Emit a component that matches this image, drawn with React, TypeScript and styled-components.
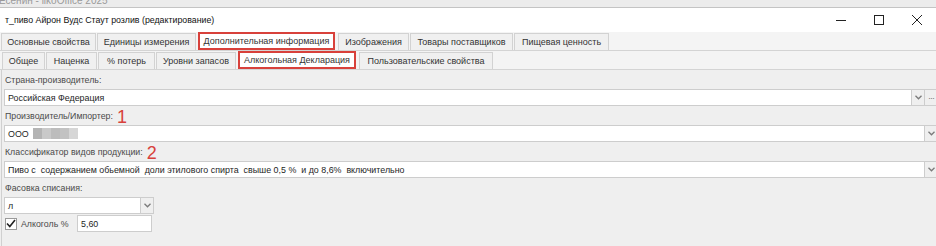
import React from 'react';
import styled, { createGlobalStyle } from 'styled-components';

const GlobalStyle = createGlobalStyle`
  html, body {
    margin: 0;
    padding: 0;
    background: #efefef;
  }
  body {
    font-family: "Liberation Sans", Arial, sans-serif;
  }
`;

const Screen = styled.div`
  width: 936px;
  height: 246px;
  overflow: hidden;
  background: #efefef;
  display: flex;
  flex-direction: column;
`;

const BackStrip = styled.div`
  height: 7px;
  overflow: hidden;
  background: #ececec;
  border-bottom: 1px solid #c4c4c4;
  color: #9a9a9a;
  font-size: 10px;
  line-height: 10px;
  white-space: nowrap;
`;

const BackTitle = styled.div`
  margin: -4px 0 0 -1px;
`;

const TitleBar = styled.div`
  height: 24px;
  background: #ffffff;
  display: flex;
  align-items: center;
  justify-content: space-between;
  padding-left: 5px;
  font-size: 8.8px;
  color: #111;
`;

const WindowButtons = styled.div`
  display: flex;
  align-items: center;
  height: 100%;
`;

const WinButton = styled.div`
  width: 38px;
  height: 100%;
  display: flex;
  align-items: center;
  justify-content: center;
`;

const TabRow = styled.div<{ $inset: number }>`
  height: 18px;
  display: flex;
  align-items: flex-end;
  gap: 1px;
  padding-left: ${(p) => p.$inset}px;
  background: #f4f4f4;
  border-bottom: 1px solid #d4d4d4;
`;

const Tab = styled.div<{ $w: number; $marked?: boolean }>`
  box-sizing: border-box;
  width: ${(p) => p.$w}px;
  height: ${(p) => (p.$marked ? 18 : 17)}px;
  margin: ${(p) => (p.$marked ? '0 2px 0 1px' : '0')};
  display: flex;
  align-items: center;
  justify-content: center;
  font-size: 9px;
  color: #333;
  white-space: nowrap;
  background: ${(p) => (p.$marked ? '#ffffff' : '#f0f0f0')};
  border: ${(p) => (p.$marked ? '2px solid #d8413b' : '1px solid #d2d2d2')};
  border-bottom: ${(p) => (p.$marked ? '2px solid #d8413b' : 'none')};
`;

const Content = styled.div`
  flex: 1;
  display: flex;
  flex-direction: column;
  padding-left: 2px;
  border-left: 1px solid #d0d0d0;
  margin-left: 1px;
`;

const Label = styled.div`
  height: 19px;
  display: flex;
  align-items: center;
  padding-left: 1px;
  font-size: 8.8px;
  color: #4a4a4a;
  white-space: nowrap;
`;

const Mark = styled.span`
  margin-left: 4px;
  font-size: 18px;
  line-height: 0;
  color: #d8413b;
  position: relative;
  top: 1px;
`;

const Field = styled.div<{ $w?: number }>`
  box-sizing: border-box;
  height: 17px;
  width: ${(p) => (p.$w ? `${p.$w}px` : 'auto')};
  display: flex;
  align-items: stretch;
  background: #ffffff;
  border: 1px solid #cdcdcd;
  ${(p) => (p.$w ? '' : 'margin-right: -2px;')}
`;

const FieldText = styled.div`
  flex: 1;
  display: flex;
  align-items: center;
  gap: 3px;
  padding-left: 3px;
  font-size: 8.9px;
  color: #1e1e1e;
  white-space: pre;
  overflow: hidden;
`;

const SideButton = styled.div`
  width: 12px;
  display: flex;
  align-items: center;
  justify-content: center;
  background: #efefef;
  border-left: 1px solid #cdcdcd;
  color: #777;
  font-size: 9px;
  letter-spacing: -1px;
`;

const Redacted = styled.span`
  display: inline-flex;
  height: 11px;
  margin-left: 1px;
`;

const Pixel = styled.span<{ $c: string }>`
  width: 9px;
  height: 100%;
  background: ${(p) => p.$c};
`;

const CheckRow = styled.div`
  height: 17px;
  display: flex;
  align-items: center;
  margin-top: 1px;
  padding-left: 1px;
  font-size: 8.8px;
  color: #4a4a4a;
`;

const CheckBox = styled.div`
  box-sizing: border-box;
  width: 12px;
  height: 12px;
  background: #fff;
  border: 1px solid #9a9a9a;
  display: flex;
  align-items: center;
  justify-content: center;
  margin-right: 4px;
`;

const CheckLabel = styled.span`
  width: 56px;
`;

const Chevron = () => (
  <svg width="7" height="5" viewBox="0 0 7 5">
    <path d="M0.5 0.8 L3.5 3.8 L6.5 0.8" fill="none" stroke="#7a7a7a" strokeWidth="1.3" />
  </svg>
);

const topTabs = [
  { label: 'Основные свойства', w: 95 },
  { label: 'Единицы измерения', w: 99 },
  { label: 'Дополнительная информация', w: 137, marked: true },
  { label: 'Изображения', w: 71 },
  { label: 'Товары поставщиков', w: 103 },
  { label: 'Пищевая ценность', w: 95 },
];

const subTabs = [
  { label: 'Общее', w: 43 },
  { label: 'Наценка', w: 51 },
  { label: '% потерь', w: 57 },
  { label: 'Уровни запасов', w: 80 },
  { label: 'Алкогольная Декларация', w: 118, marked: true },
  { label: 'Пользовательские свойства', w: 134 },
];

const blur = ['#b4b4b4', '#c9c9c9', '#bcbcbc', '#c2c2c2', '#d6d6d6'];

export default function App() {
  return (
    <>
      <GlobalStyle />
      <Screen>
        <BackStrip>
          <BackTitle>Есенин - iikoOffice 2025</BackTitle>
        </BackStrip>
        <TitleBar>
          <span>т_пиво Айрон Вудс Стаут розлив (редактирование)</span>
          <WindowButtons>
            <WinButton>
              <svg width="10" height="10" viewBox="0 0 10 10">
                <path d="M0 5.5 H10" stroke="#222" strokeWidth="1" />
              </svg>
            </WinButton>
            <WinButton>
              <svg width="10" height="10" viewBox="0 0 10 10">
                <rect x="0.5" y="0.5" width="9" height="9" fill="none" stroke="#222" strokeWidth="1" />
              </svg>
            </WinButton>
            <WinButton>
              <svg width="10" height="10" viewBox="0 0 10 10">
                <path d="M0 0 L10 10 M10 0 L0 10" stroke="#222" strokeWidth="1" />
              </svg>
            </WinButton>
          </WindowButtons>
        </TitleBar>

        <TabRow $inset={1}>
          {topTabs.map((t) => (
            <Tab key={t.label} $w={t.w} $marked={t.marked}>
              {t.label}
            </Tab>
          ))}
        </TabRow>
        <TabRow $inset={2}>
          {subTabs.map((t) => (
            <Tab key={t.label} $w={t.w} $marked={t.marked}>
              {t.label}
            </Tab>
          ))}
        </TabRow>

        <Content>
          <Label>Страна-производитель:</Label>
          <Field>
            <FieldText>Российская Федерация</FieldText>
            <SideButton>
              <Chevron />
            </SideButton>
            <SideButton>···</SideButton>
          </Field>

          <Label>
            Производитель/Импортер:<Mark>1</Mark>
          </Label>
          <Field>
            <FieldText>
              ООО
              <Redacted>
                {blur.map((c, i) => (
                  <Pixel key={i} $c={c} />
                ))}
              </Redacted>
            </FieldText>
            <SideButton>
              <Chevron />
            </SideButton>
          </Field>

          <Label>
            Классификатор видов продукции:<Mark>2</Mark>
          </Label>
          <Field>
            <FieldText>Пиво с  содержанием обьемной  доли этилового спирта  свыше 0,5 %  и до 8,6%  включительно</FieldText>
            <SideButton>
              <Chevron />
            </SideButton>
          </Field>

          <Label>Фасовка списания:</Label>
          <Field $w={150}>
            <FieldText>л</FieldText>
            <SideButton>
              <Chevron />
            </SideButton>
          </Field>

          <CheckRow>
            <CheckBox>
              <svg width="10" height="9" viewBox="0 0 10 9">
                <path d="M1 4.5 L3.8 7.5 L9 1" fill="none" stroke="#222" strokeWidth="1.6" />
              </svg>
            </CheckBox>
            <CheckLabel>Алкоголь %</CheckLabel>
            <Field $w={75}>
              <FieldText>5,60</FieldText>
            </Field>
          </CheckRow>
        </Content>
      </Screen>
    </>
  );
}
